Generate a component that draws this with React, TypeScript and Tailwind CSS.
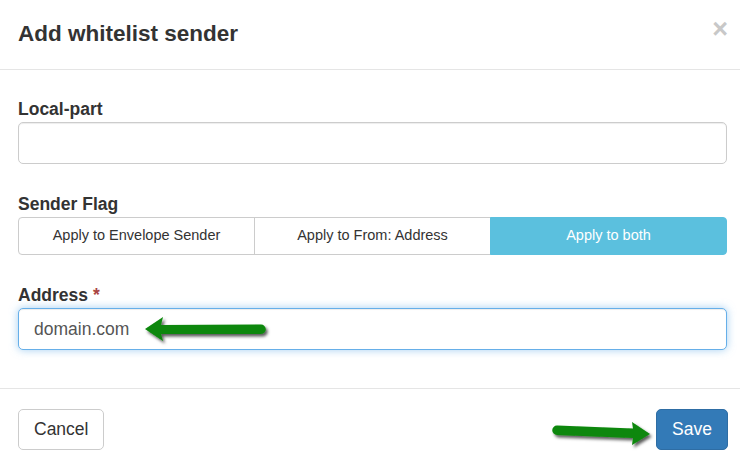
import React from "react";

function ArrowLeft() {
  return (
    <svg className="absolute left-[140px] top-[312px]" width="132" height="36" viewBox="0 0 132 36">
      <defs>
        <filter id="sh1" x="-10%" y="-30%" width="130%" height="180%">
          <feDropShadow dx="2" dy="2.5" stdDeviation="1.6" floodColor="#000" floodOpacity="0.65" />
        </filter>
      </defs>
      <path
        d="M5,17 L23,5 L21,13 L121,12.5 A4.75,4.75 0 0 1 121,22 L21,22 L23,29 Z"
        fill="#0a870a"
        filter="url(#sh1)"
      />
    </svg>
  );
}

function ArrowRight() {
  return (
    <svg className="absolute left-[546px] top-[414px]" width="112" height="38" viewBox="0 0 112 38">
      <defs>
        <filter id="sh2" x="-10%" y="-30%" width="130%" height="180%">
          <feDropShadow dx="2" dy="2.5" stdDeviation="1.6" floodColor="#000" floodOpacity="0.65" />
        </filter>
      </defs>
      <path
        d="M11,11.5 L87,14.5 L86,8 L104,20 L86,31 L87,24 L11,21 A4.75,4.75 0 0 1 11,11.5 Z"
        fill="#0a870a"
        filter="url(#sh2)"
      />
    </svg>
  );
}

export default function App() {
  return (
    <div className="relative w-[740px] h-[465px] overflow-hidden bg-white text-[#333] font-['Liberation_Sans',Arial,sans-serif]">
      {/* Header */}
      <div className="flex h-[70px] items-start justify-between border-b border-[#e5e5e5] pl-[18px] pr-[12px] pt-[18px]">
        <h4 className="text-[22.5px] font-bold leading-[32px]">Add whitelist sender</h4>
        <span className="mt-[-2px] text-[27px] font-bold leading-none text-[#c8c8c8]">×</span>
      </div>

      {/* Body */}
      <div className="pl-[18px] pr-[13px] pt-[27px] pb-[38px]">
        <label className="block text-[17.5px] font-bold leading-[25px]">Local-part</label>
        <div className="h-[42px] rounded-[5px] border border-[#ccc] bg-white shadow-[inset_0_1px_1px_rgba(0,0,0,0.075)]" />

        <label className="mt-[28px] block text-[17.5px] font-bold leading-[25px]">Sender Flag</label>
        <div className="flex h-[38px] text-[14.5px]">
          <div className="flex flex-1 items-center justify-center rounded-l-[4px] border border-[#ccc] bg-white text-[#333]">
            Apply to Envelope Sender
          </div>
          <div className="-ml-px flex flex-1 items-center justify-center border border-[#ccc] bg-white text-[#333]">
            Apply to From: Address
          </div>
          <div className="-ml-px flex flex-1 items-center justify-center rounded-r-[4px] border border-[#5bc0de] bg-[#5bc0de] text-white">
            Apply to both
          </div>
        </div>

        <label className="mt-[28px] block text-[17.5px] font-bold leading-[25px]">
          Address <span className="text-[#a94442]">*</span>
        </label>
        <div className="flex h-[42px] items-center rounded-[5px] border border-[#66afe9] bg-white px-[15px] text-[17.5px] text-[#555] shadow-[inset_0_1px_1px_rgba(0,0,0,0.075),0_0_8px_rgba(102,175,233,0.6)]">
          domain.com
        </div>
      </div>

      {/* Footer */}
      <div className="flex items-start justify-between border-t border-[#e5e5e5] pl-[18px] pr-[12px] pt-[20px]">
        <button className="flex h-[41px] items-center rounded-[5px] border border-[#ccc] bg-white px-[15px] text-[17.5px] text-[#333]">
          Cancel
        </button>
        <button className="flex h-[41px] items-center rounded-[5px] border border-[#2e6da4] bg-[#337ab7] px-[15px] text-[17.5px] text-white">
          Save
        </button>
      </div>

      <ArrowLeft />
      <ArrowRight />
    </div>
  );
}
